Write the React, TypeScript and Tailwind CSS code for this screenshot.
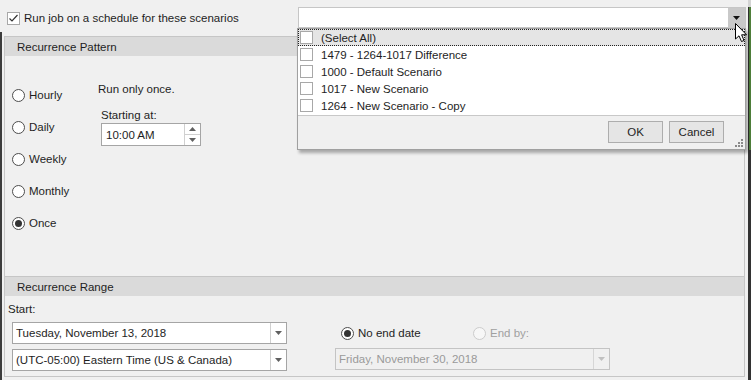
import React from 'react';

// WinForms-like schedule panel with an open scenario checklist dropdown

const scenarios = ['1479 - 1264-1017 Difference', '1000 - Default Scenario', '1017 - New Scenario', '1264 - New Scenario - Copy'];

function Arrow({ className = 'fill-[#606060]' }: { className?: string }) {
  return (
    <svg width="7" height="4" viewBox="0 0 7 4" className={className}>
      <path d="M0 0 H7 L3.5 4 Z" />
    </svg>
  );
}

function Radio({ label, checked, disabled }: { label: string; checked?: boolean; disabled?: boolean }) {
  return (
    <div className="flex items-center h-[16px]">
      <span
        className={
          'w-[13px] h-[13px] rounded-full border flex items-center justify-center shrink-0 ' +
          (disabled ? 'border-[#cccccc] bg-[#f7f7f7]' : 'border-[#4d4d4d] bg-white')
        }
      >
        {checked && <span className="w-[7px] h-[7px] rounded-full bg-[#333333]" />}
      </span>
      <span className={'ml-[4px] ' + (disabled ? 'text-[#a0a0a0]' : '')}>{label}</span>
    </div>
  );
}

function Combo({ value, disabled, className }: { value: string; disabled?: boolean; className: string }) {
  return (
    <div className={'flex h-[22px] border ' + (disabled ? 'border-[#c4c4c4] bg-[#f0f0f0] text-[#9a9a9a] ' : 'border-[#a5a5a5] bg-white ') + className}>
      <div className="flex-1 flex items-center pl-[3px] whitespace-nowrap overflow-hidden">{value}</div>
      <div className={'w-[16px] flex items-center justify-center border-l ' + (disabled ? 'border-[#d6d6d6]' : 'border-[#d0d0d0]')}>
        <Arrow className={disabled ? 'fill-[#c0c0c0]' : 'fill-[#606060]'} />
      </div>
    </div>
  );
}

function ListBox({ checked }: { checked?: boolean }) {
  return (
    <span className="w-[13px] h-[13px] border border-[#a8a8a8] bg-white shrink-0 flex items-center justify-center">
      {checked && (
        <svg width="11" height="11" viewBox="0 0 11 11" fill="none" stroke="#333" strokeWidth="1.2">
          <path d="M1.5 5.5 L4 8 L9.5 2" />
        </svg>
      )}
    </span>
  );
}

export default function App() {
  return (
    <div className="w-[751px] h-[380px] bg-[#f0f0f0] flex overflow-hidden relative text-[11.5px] leading-[14px] text-[#1e1e1e] font-['Liberation_Sans',Arial,sans-serif]">
      {/* left window edge */}
      <div className="w-[2px] flex flex-col">
        <div className="h-[32px]" />
        <div className="flex-1 bg-[#3c3c3c]" />
      </div>

      {/* content */}
      <div className="w-[746px] flex flex-col">
        <div className="h-[36px] flex items-start">
          <div className="flex items-center mt-[11px] ml-[5px] h-[14px]">
            <ListBox checked />
            <span className="ml-[4px]">Run job on a schedule for these scenarios</span>
          </div>
          <div className="ml-auto mr-[2px] mt-[7px] w-[448px] h-[21px] flex border border-[#c6c6c6] bg-white">
            <div className="flex-1" />
            <div className="w-[17px] bg-[#c9c9c9] flex items-center justify-center">
              <Arrow className="fill-[#111111]" />
            </div>
          </div>
        </div>

        <div className="ml-[2px] w-[741px] h-[341px] border border-[#c6c6c6] flex flex-col">
          <div className="h-[19px] bg-[#dadada] flex items-center pl-[12px]">Recurrence Pattern</div>
          <div className="h-[220px] flex">
            <div className="w-[93px] pl-[7px] pt-[31px] flex flex-col gap-[16px]">
              <Radio label="Hourly" />
              <Radio label="Daily" />
              <Radio label="Weekly" />
              <Radio label="Monthly" />
              <Radio label="Once" checked />
            </div>
            <div className="flex flex-col pt-[26px]">
              <div>Run only once.</div>
              <div className="ml-[3px] mt-[12px]">Starting at:</div>
              <div className="ml-[3px] mt-[1px] w-[100px] h-[23px] border border-[#a5a5a5] bg-white flex">
                <div className="flex-1 flex items-center pl-[4px]">10:00 AM</div>
                <div className="w-[16px] border-l border-[#d0d0d0] flex flex-col">
                  <div className="flex-1 flex items-center justify-center border-b border-[#d0d0d0]">
                    <Arrow className="fill-[#606060] rotate-180" />
                  </div>
                  <div className="flex-1 flex items-center justify-center">
                    <Arrow />
                  </div>
                </div>
              </div>
            </div>
          </div>

          <div className="h-[20px] bg-[#dadada] border-t border-[#c6c6c6] flex items-center pl-[12px]">Recurrence Range</div>
          <div className="flex-1 flex">
            <div className="w-[330px] flex flex-col pt-[6px]">
              <div className="ml-[3px]">Start:</div>
              <Combo className="ml-[7px] mt-[6px] w-[275px]" value="Tuesday, November 13, 2018" />
              <Combo className="ml-[7px] mt-[5px] w-[275px]" value="(UTC-05:00) Eastern Time (US & Canada)" />
            </div>
            <div className="flex flex-col pt-[29px]">
              <div className="flex ml-[6px]">
                <div className="w-[132px]">
                  <Radio label="No end date" checked />
                </div>
                <Radio label="End by:" disabled />
              </div>
              <Combo className="mt-[7px] w-[275px]" value="Friday, November 30, 2018" disabled />
            </div>
          </div>
        </div>
      </div>

      {/* right window edge */}
      <div className="w-[3px] flex flex-col">
        <div className="h-[7px] bg-[#d4d4d4]" />
        <div className="h-[143px] bg-[#4f7f3a] border-l border-[#2f2f2f]" />
        <div className="flex-1 bg-[#333333]" />
      </div>

      {/* open checklist dropdown */}
      <div className="absolute left-[297px] top-[28px] w-[449px] h-[122px] border border-[#a0a0a0] bg-white flex flex-col shadow-[2px_3px_3px_rgba(0,0,0,0.3)]">
        <div className="h-[17px] bg-[#e5e5e5] outline-1 outline-dotted outline-[#222] -outline-offset-1 flex items-center pl-[2px]">
          <ListBox />
          <span className="ml-[8px]">(Select All)</span>
        </div>
        {scenarios.map((s) => (
          <div key={s} className="h-[17px] flex items-center pl-[2px]">
            <ListBox />
            <span className="ml-[8px]">{s}</span>
          </div>
        ))}
        <div className="flex-1 mt-[1px] border-t border-[#c8c8c8] bg-[#f0f0f0] flex justify-end items-start gap-[6px] pt-[5px] pr-[21px] relative">
          <button className="w-[55px] h-[22px] border border-[#adadad] bg-[#e5e5e5]">OK</button>
          <button className="w-[55px] h-[22px] border border-[#adadad] bg-[#e5e5e5]">Cancel</button>
          <svg width="9" height="9" viewBox="0 0 9 9" className="absolute right-[1px] bottom-[1px] fill-[#8a8a8a]">
            <rect x="6" y="0" width="2" height="2" />
            <rect x="3" y="3" width="2" height="2" />
            <rect x="6" y="3" width="2" height="2" />
            <rect x="0" y="6" width="2" height="2" />
            <rect x="3" y="6" width="2" height="2" />
            <rect x="6" y="6" width="2" height="2" />
          </svg>
        </div>
      </div>

      {/* mouse pointer */}
      <svg width="13" height="20" viewBox="0 0 13 20" className="absolute left-[735px] top-[23px]">
        <path d="M0.5 0.5 L0.5 16 L4 12.8 L6.5 18.5 L9 17.5 L6.6 11.8 L11.5 11.8 Z" fill="white" stroke="black" strokeWidth="1" strokeLinejoin="round" />
      </svg>
    </div>
  );
}
